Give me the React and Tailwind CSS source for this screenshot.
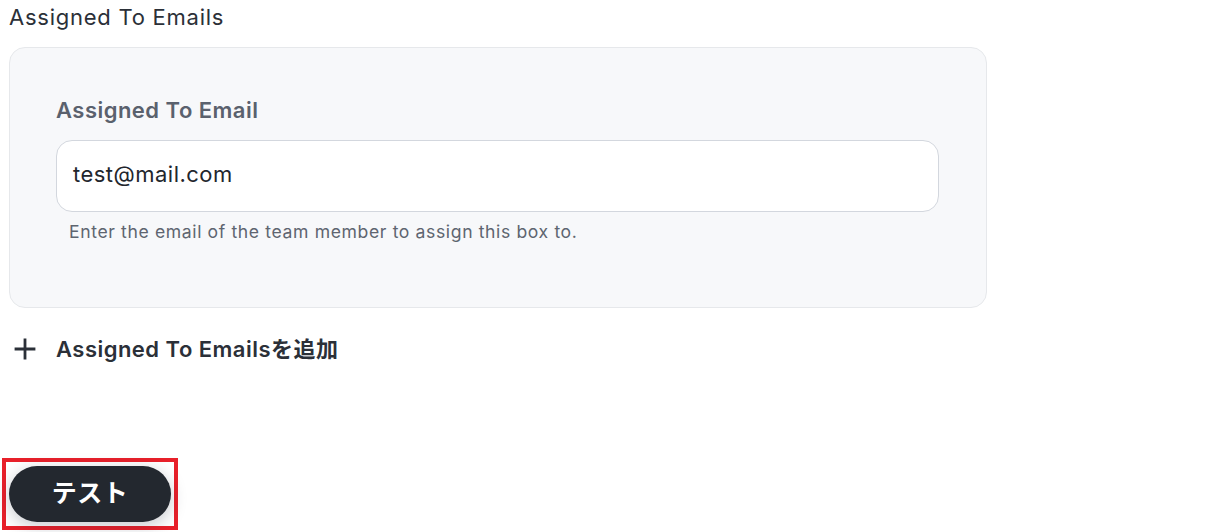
import React from 'react';

const font = { fontFamily: 'Inter, "Noto Sans CJK JP", sans-serif' };

const PlusIcon = () => (
  <svg width="22" height="22" viewBox="0 0 22 22" fill="none" stroke="#2b3038" strokeWidth="2.8" strokeLinecap="square">
    <path d="M11 2v18M2 11h18" />
  </svg>
);

export default function App() {
  return (
    <div className="min-h-[532px] bg-white text-[#2b3038] tracking-[0.03em]" style={font}>
      <div className="px-[9px] pt-[2px]">
        <h2 className="text-[22px] leading-[30px] font-normal tracking-[0.034em]">Assigned To Emails</h2>

        {/* Email list card */}
        <div className="mt-[15px] w-[978px] h-[261px] rounded-[16px] border border-[#e6e8eb] bg-[#f7f8fa] px-[46px] pt-[49px]">
          <label className="block text-[22px] leading-[26px] font-semibold text-[#5a616d]">Assigned To Email</label>
          <div className="mt-[17px] h-[72px] w-[883px] rounded-[16px] border border-[#d3d7de] bg-white flex items-center px-[16px]">
            <span className="text-[22px] text-[#22262d] -mt-[4px]">test@mail.com</span>
          </div>
          <p className="mt-[8px] pl-[13px] text-[17.6px] leading-[24px] tracking-[0.035em] text-[#5e6570]">
            Enter the email of the team member to assign this box to.
          </p>
        </div>

        <button type="button" className="mt-[26px] flex items-center gap-[20px] pl-[5px]">
          <PlusIcon />
          <span className="text-[22px] leading-[30px] font-semibold">Assigned To Emailsを追加</span>
        </button>
      </div>

      <div className="mt-[94px] ml-[2px] w-[176px] h-[72px] border-[4px] border-[#e8202a] pl-[3px] pt-[4px]">
        <button
          type="button"
          className="w-[162px] h-[56px] rounded-full bg-[#23282f] text-white text-[25px] font-bold shadow-[0_4px_16px_rgba(30,40,60,0.25)]"
        >
          テスト
        </button>
      </div>
    </div>
  );
}
